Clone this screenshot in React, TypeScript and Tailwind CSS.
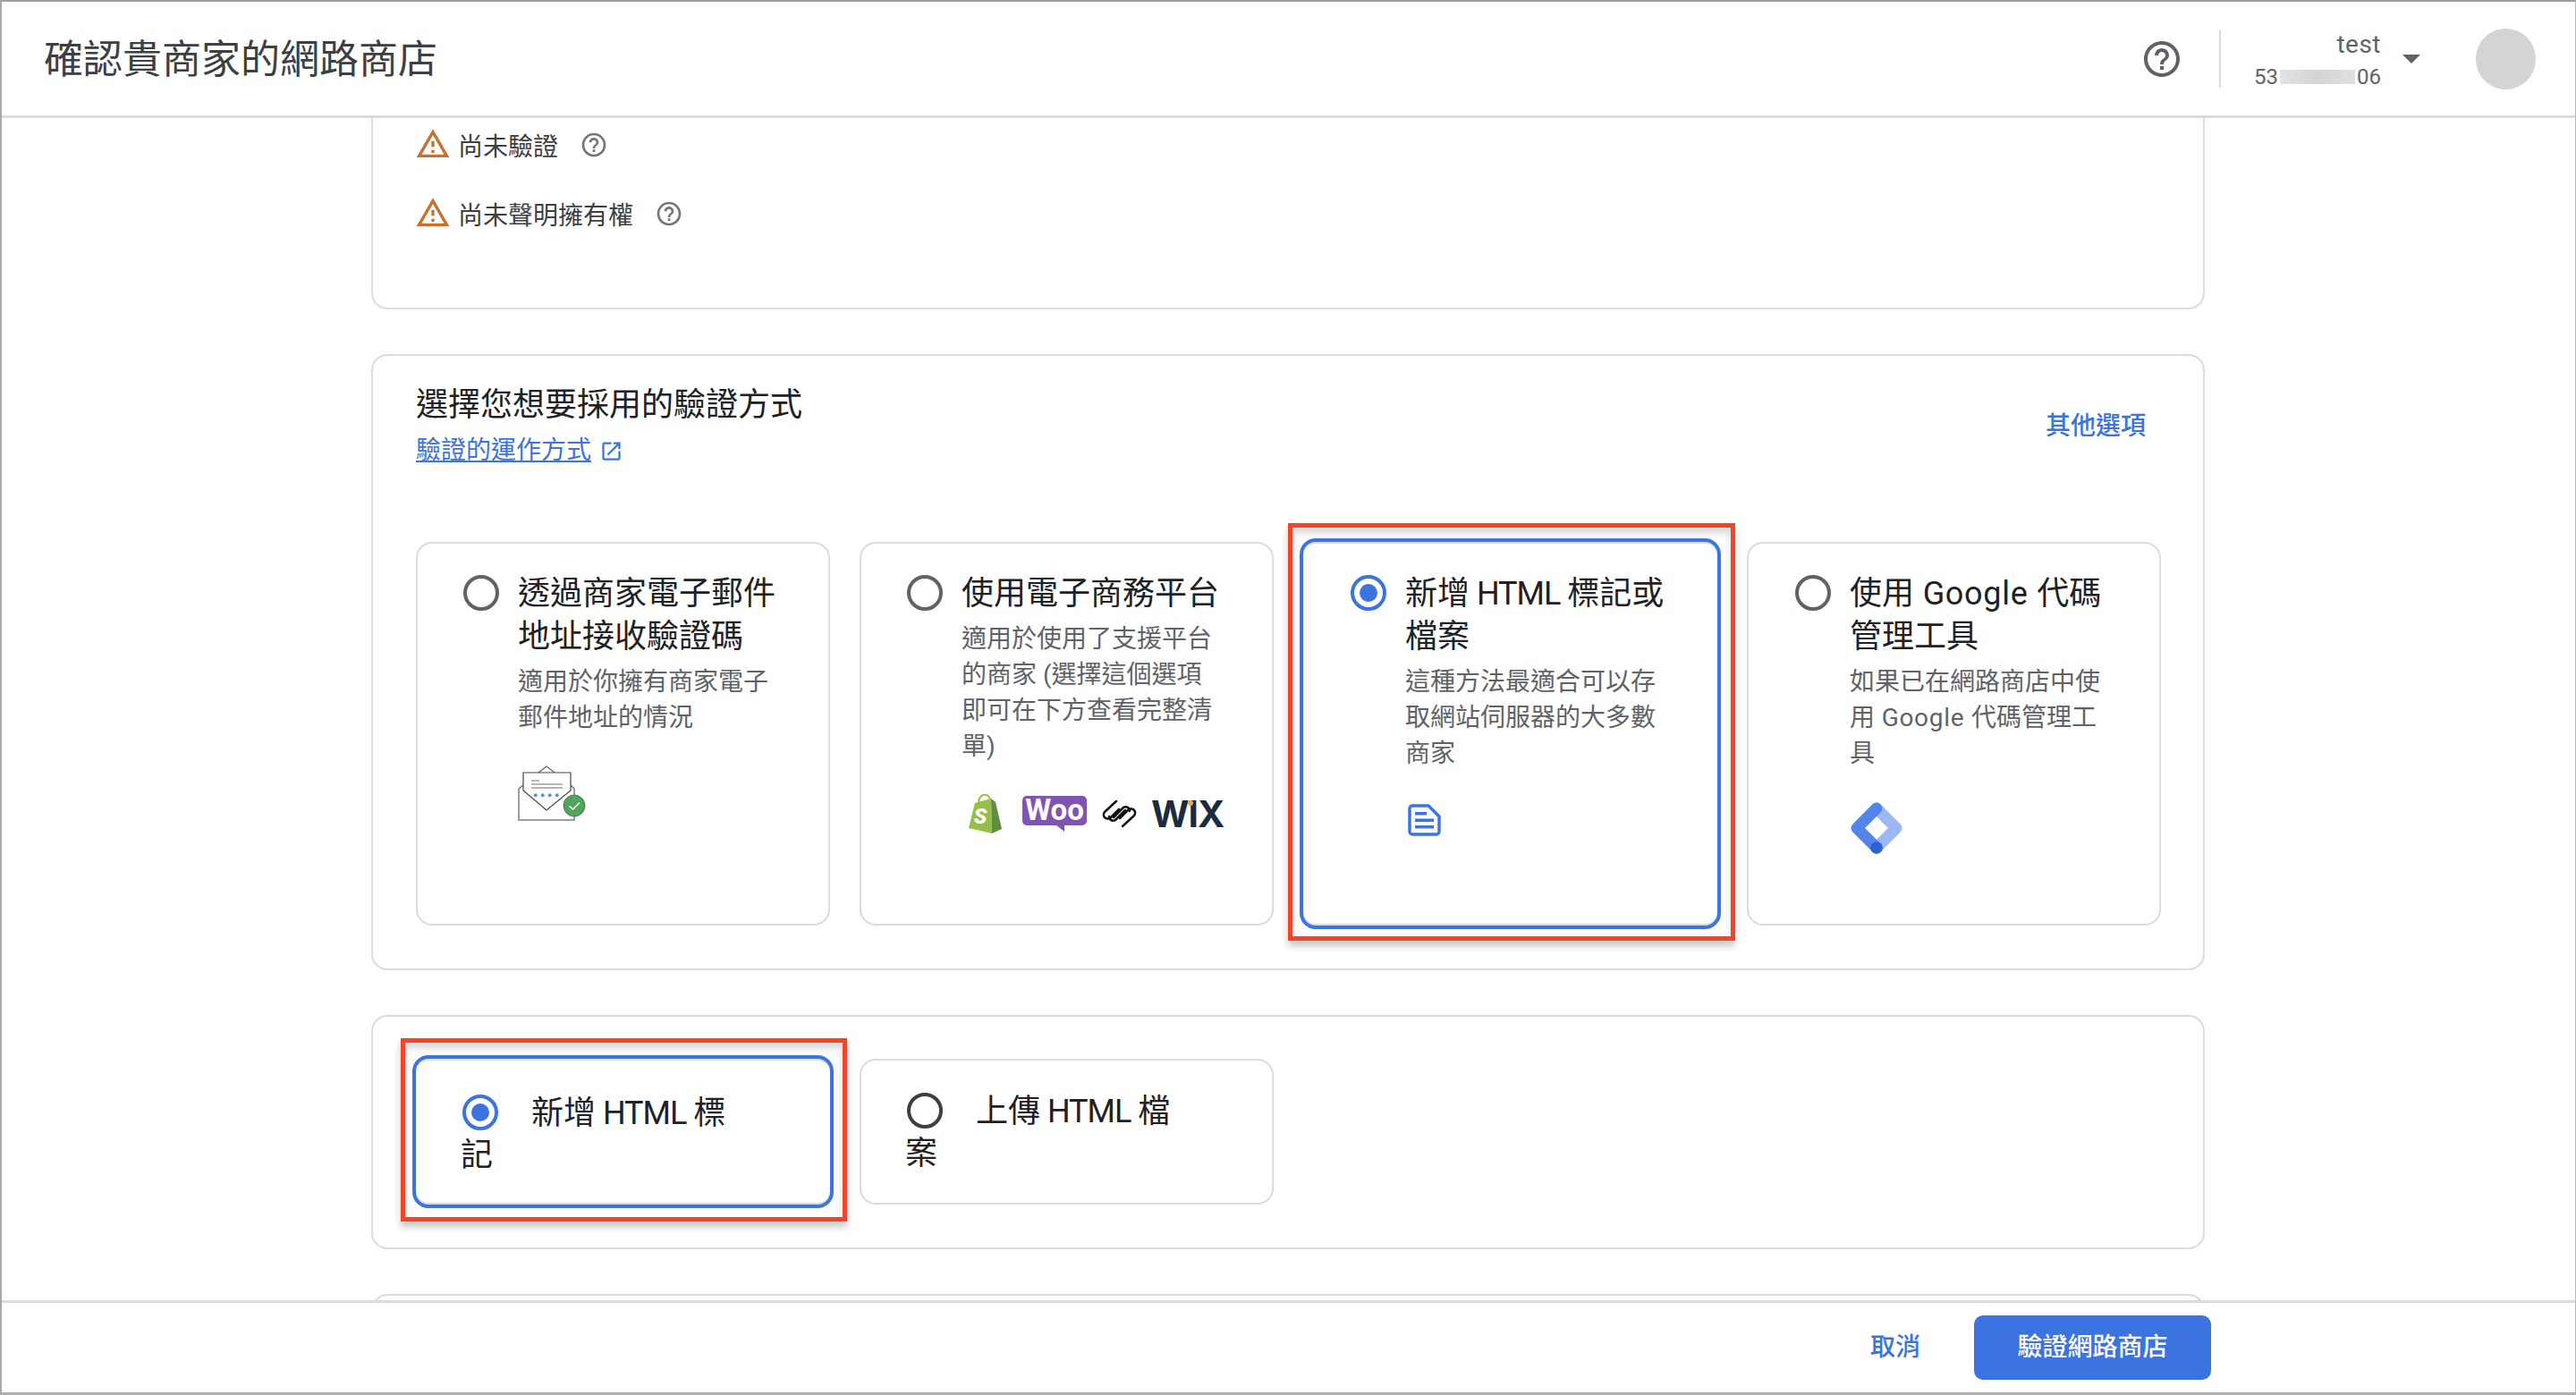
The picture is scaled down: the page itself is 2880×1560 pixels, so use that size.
const CJK = "font-['Roboto','Noto_Sans_CJK_TC','Noto_Sans',sans-serif]";

function Help({ className }: { className: string }) {
  return (
    <svg viewBox="0 0 24 24" className={className} fill="currentColor">
      <path d="M11 18h2v-2h-2v2zm1-16C6.48 2 2 6.48 2 12s4.48 10 10 10 10-4.48 10-10S17.52 2 12 2zm0 18c-4.41 0-8-3.59-8-8s3.59-8 8-8 8 3.59 8 8-3.59 8-8 8zm0-14c-2.21 0-4 1.79-4 4h2c0-1.1.9-2 2-2s2 .9 2 2c0 2-3 1.75-3 5h2c0-2.25 3-2.5 3-5 0-2.21-1.79-4-4-4z" />
    </svg>
  );
}

function Warn() {
  return (
    <svg viewBox="0 0 24 24" className="w-[40px] h-[40px] -mt-[4px] -ml-[1px] text-[#c8702c]" fill="currentColor">
      <path d="M12 5.99L19.53 19H4.47L12 5.99M12 2L1 21h22L12 2zm1 14h-2v2h2v-2zm0-6h-2v4h2v-4z" />
    </svg>
  );
}

function Radio({ on, dark }: { on?: boolean; dark?: boolean }) {
  return (
    <span
      className={`inline-flex shrink-0 items-center justify-center w-[40px] h-[40px] rounded-full border-[4px] bg-white ${
        on ? "border-[#3b73e0]" : dark ? "border-[#3c4043]" : "border-[#5f6368]"
      }`}
    >
      {on && <span className="block w-[20px] h-[20px] rounded-full bg-[#3b73e0]" />}
    </span>
  );
}

function MailIcon() {
  return (
    <svg viewBox="0 0 76 62" className="w-[76px] h-[62px]" fill="none">
      <path d="M1 26V61H63V26" stroke="#9e9e9e" strokeWidth="2" />
      <path d="M1 26L6 22M63 26L59 22M23 8L32 1L41 8" stroke="#5f6368" strokeWidth="1.2" />
      <path d="M6 8H59V28L32 50L6 28Z" fill="#fff" stroke="#444746" strokeWidth="1.2" />
      <path d="M15 17H24M15 21H50M15 25H50" stroke="#9e9e9e" strokeWidth="1.6" />
      <g fill="#5a8ff0">
        <circle cx="19.7" cy="33.3" r="2" />
        <circle cx="27.7" cy="33.3" r="2" />
        <circle cx="35.7" cy="33.3" r="2" />
        <circle cx="43.7" cy="33.3" r="2" />
      </g>
      <circle cx="63" cy="45" r="12" fill="#53a45b" stroke="#4a5a50" strokeWidth="0.8" />
      <path d="M57.5 45.5L61.5 49L69 41.5" stroke="#fff" strokeWidth="1.4" />
    </svg>
  );
}

function Logos() {
  return (
    <div className="flex items-start mt-[33px] ml-[7px] h-[44px]">
      <svg viewBox="0 0 38 44" className="w-[38px] h-[44px] overflow-visible">
        <path d="M12 10C12 3 17 0 20 1C23 1 25 4 25 8" fill="none" stroke="#95bf47" strokeWidth="2" />
        <path d="M26 5L8 10L1 38L27 44Z" fill="#95bf47" />
        <path d="M26 5L31 9L38 39L27 44Z" fill="#5e8e3e" />
        <text x="14" y="33" fontSize="24" fontWeight="900" fontStyle="italic" fill="#fff" fontFamily="Roboto, sans-serif" textAnchor="middle">S</text>
      </svg>
      <svg viewBox="0 0 72 40" className="w-[72px] h-[40px] ml-[23px] mt-[2px] overflow-visible">
        <rect x="0" y="0" width="72" height="33" rx="5" fill="#7f54b3" />
        <path d="M37 32H47V40Z" fill="#7f54b3" />
        <text x="36" y="27" fontSize="33" fontWeight="700" fill="#fff" fontFamily="Roboto, sans-serif" textAnchor="middle">Woo</text>
      </svg>
      <svg viewBox="0 0 39 32" className="w-[39px] h-[32px] ml-[17px] mt-[6px]" fill="none" stroke="#111" strokeWidth="2.5" strokeLinecap="round" strokeLinejoin="round">
        <path d="M16 2L3 14a4.5 4.5 0 0 0 7 6L19 11" />
        <path d="M13 20L24 9A4.5 4.5 0 0 1 31 13" />
        <path d="M26 12L15 23A4.5 4.5 0 0 1 8 19" />
        <path d="M23 30L36 18a4.5 4.5 0 0 0 -7 -6L20 21" />
      </svg>
      <svg viewBox="0 0 84 34" className="w-[84px] h-[34px] ml-[16px] mt-[5px] overflow-visible">
        <text x="0" y="32" fontSize="41" fontWeight="700" letterSpacing="-1" fill="#1b2c3f" fontFamily="Inter, sans-serif">WIX</text>
        <circle cx="44" cy="5" r="3" fill="#f5a343" />
      </svg>
    </div>
  );
}

function DocIcon() {
  return (
    <svg viewBox="0 0 37 36" className="w-[37px] h-[36px] mt-[36px] ml-[3px]">
      <path d="M2 5A3 3 0 0 1 5 2H23L35 14V31A3 3 0 0 1 32 34H5A3 3 0 0 1 2 31Z" fill="#fff" stroke="#3b73e0" strokeWidth="3.4" />
      <path d="M8 9H21V12.5H8ZM8 16.5H29V20H8ZM8 24H29V27.5H8Z" fill="#3b73e0" />
    </svg>
  );
}

function TagIcon() {
  return (
    <svg viewBox="0 0 60 60" className="w-[60px] h-[60px] mt-[33px]" fill="none" strokeLinecap="round" strokeLinejoin="round" strokeWidth="13">
      <path d="M30 8L52 30L30 52" stroke="#9bb8f5" />
      <path d="M30 8L8 30L30 52" stroke="#5284ea" />
      <circle cx="30" cy="52" r="6.8" fill="#2e63cf" stroke="none" />
    </svg>
  );
}

function Highlight({ className }: { className: string }) {
  return (
    <div
      className={`absolute border-[5px] border-[#f0452a] pointer-events-none shadow-[0_6px_8px_rgba(0,0,0,0.22),inset_0_6px_8px_rgba(0,0,0,0.16)] ${className}`}
    />
  );
}

function MethodCard({
  on,
  last,
  title,
  desc,
  children,
}: {
  on?: boolean;
  last?: boolean;
  title: React.ReactNode;
  desc: React.ReactNode;
  children: React.ReactNode;
}) {
  return (
    <div
      className={`relative flex gap-[21px] rounded-[18px] bg-white ${
        on
          ? "-m-[4px] pl-[53px] pt-[35px] border-[4px] border-[#3b73e0] shadow-[inset_0_2px_0_#dadce0,inset_0_-2px_0_#dadce0]"
          : last
            ? "border-[2px] border-[#dadce0] pl-[52px] pt-[33px]"
            : "border-[2px] border-[#dadce0] pl-[51px] pt-[33px]"
      }`}
    >
      <div className="pt-[2px]">
        <Radio on={on} />
      </div>
      <div className="whitespace-nowrap -mt-[1px]">
        <div className="text-[36px] leading-[48px] text-[#202124]">{title}</div>
        <div className="mt-[7px] text-[28px] leading-[40px] text-[#5f6368]">{desc}</div>
        {children}
      </div>
      {on && <Highlight className="-top-[21px] -bottom-[17px] -left-[17px] -right-[20px]" />}
    </div>
  );
}

function TypeCard({ on, a, b }: { on?: boolean; a: React.ReactNode; b: string }) {
  return (
    <div
      className={`relative rounded-[18px] bg-white whitespace-nowrap text-[36px] leading-[47px] text-[#202124] ${
        on
          ? "-m-[4px] border-[4px] border-[#3b73e0] pl-[50px] pt-[38px] shadow-[inset_0_2px_0_#dadce0,inset_0_-2px_0_#dadce0]"
          : "border-[2px] border-[#dadce0] pl-[49px] pt-[34px]"
      }`}
    >
      <div className="flex items-center gap-[37px] pl-[2px]">
        <span className="-mt-[3px] flex">
          <Radio on={on} dark={!on} />
        </span>
        <span>{a}</span>
      </div>
      <div>{b}</div>
      {on && <Highlight className="-top-[23px] -bottom-[19px] -left-[17px] -right-[19px]" />}
    </div>
  );
}

const Html = () => <span className="tracking-[-1px]"> HTML </span>;
const Goog = () => <span className="tracking-[0.7px]"> Google </span>;

export default function App() {
  return (
    <div className={`${CJK} h-[1560px] w-[2880px] flex flex-col overflow-hidden bg-white border-t-[2px] border-t-[#9e9e9e] border-l-[2px] border-l-[#a8a8a8] border-b-[3px] border-b-[#b0b0b0] border-r border-r-[#b8b8b8]`}>
      <header className="h-[130px] shrink-0 flex items-center border-b-[3px] border-[#dadce0] pl-[47px]">
        <h1 className="text-[44px] leading-none font-normal text-[#3c4043] mt-[2px]">確認貴商家的網路商店</h1>
        <div className="ml-auto flex items-center">
          <Help className="w-[48px] h-[48px] text-[#5f6368]" />
          <div className="w-[2px] h-[64px] bg-[#dadce0] ml-[40px]" />
          <div className="w-[178px] ml-[1px] mt-[4px] text-right text-[#5f6368]">
            <div className="text-[28px] leading-[36px] tracking-[0.5px]">test</div>
            <div className="text-[24px] leading-[36px] flex justify-end items-center">
              <span>53</span>
              <span className="block w-[84px] h-[16px] mx-[2px] bg-[linear-gradient(90deg,#e2e3e4,#d3d4d5_50%,#dfe0e1)]" />
              <span>06</span>
            </div>
          </div>
          <div className="ml-[24px] w-0 h-0 border-x-[10px] border-x-transparent border-t-[10px] border-t-[#5f6368]" />
          <div className="ml-[62px] mr-[44px] w-[67px] h-[68px] rounded-full bg-[#d4d4d4]" />
        </div>
      </header>

      <main className="flex-1 overflow-hidden pl-[413px]">
        <div className="w-[2050px] flex flex-col gap-[50px]">
          <section className="h-[214px] rounded-b-[18px] border-x-[2px] border-b-[2px] border-[#dadce0] pl-[48px] pt-[13px] flex flex-col gap-[37px] text-[28px] leading-[40px] text-[#3c4043]">
            <div className="flex items-start">
              <Warn />
              <span className="ml-[8px]">尚未驗證</span>
              <Help className="w-[32px] h-[32px] ml-[24px] mt-[1px] text-[#757575]" />
            </div>
            <div className="flex items-start">
              <Warn />
              <span className="ml-[8px]">尚未聲明擁有權</span>
              <Help className="w-[32px] h-[32px] ml-[24px] mt-[1px] text-[#757575]" />
            </div>
          </section>

          <section className="h-[689px] rounded-[18px] border-[2px] border-[#dadce0] pl-[48px] pr-[46px] pt-[31px]">
            <div className="flex items-center justify-between pr-[18px]">
              <div>
                <div className="text-[36px] leading-[48px] text-[#202124]">選擇您想要採用的驗證方式</div>
                <div className="mt-[7px] text-[28px] leading-[40px] flex items-center text-[#3b73e0]">
                  <a className="underline">驗證的運作方式</a>
                  <svg viewBox="0 0 24 24" className="w-[27px] h-[27px] ml-[9px]" fill="currentColor">
                    <path d="M19 19H5V5h7V3H5c-1.11 0-2 .9-2 2v14c0 1.1.89 2 2 2h14c1.1 0 2-.9 2-2v-7h-2v7zM14 3v2h3.59l-9.83 9.83 1.41 1.41L19 6.41V10h2V3h-7z" />
                  </svg>
                </div>
              </div>
              <a className="text-[28px] font-medium text-[#3b73e0]">其他選項</a>
            </div>
            <div className="grid grid-cols-[repeat(4,463px)] gap-x-[33px] h-[429px] mt-[82px]">
              <MethodCard title={<>透過商家電子郵件<br />地址接收驗證碼</>} desc={<>適用於你擁有商家電子<br />郵件地址的情況</>}>
                <div className="mt-[33px]"><MailIcon /></div>
              </MethodCard>
              <MethodCard title="使用電子商務平台" desc={<>適用於使用了支援平台<br />的商家 (選擇這個選項<br />即可在下方查看完整清<br />單)</>}>
                <Logos />
              </MethodCard>
              <MethodCard on title={<>新增<Html />標記或<br />檔案</>} desc={<>這種方法最適合可以存<br />取網站伺服器的大多數<br />商家</>}>
                <DocIcon />
              </MethodCard>
              <MethodCard last title={<>使用<Goog />代碼<br />管理工具</>} desc={<>如果已在網路商店中使<br />用<Goog />代碼管理工<br />具</>}>
                <TagIcon />
              </MethodCard>
            </div>
          </section>

          <section className="h-[262px] rounded-[18px] border-[2px] border-[#dadce0] pl-[48px] pt-[47px]">
            <div className="grid grid-cols-[repeat(4,463px)] gap-x-[33px] h-[163px]">
              <TypeCard on a={<>新增<Html />標</>} b="記" />
              <TypeCard a={<>上傳<Html />檔</>} b="案" />
            </div>
          </section>

          <section className="h-[40px] rounded-t-[18px] border-x-[2px] border-t-[2px] border-[#dadce0] shrink-0" />
        </div>
      </main>

      <footer className="h-[103px] shrink-0 border-t-[3px] border-[#dadce0] flex items-center justify-end pr-[407px]">
        <button className="text-[28px] font-medium text-[#3b73e0]">取消</button>
        <button className="ml-[60px] w-[265px] h-[72px] rounded-[10px] bg-[#3b73e0] text-[28px] font-medium text-white">驗證網路商店</button>
      </footer>
    </div>
  );
}
